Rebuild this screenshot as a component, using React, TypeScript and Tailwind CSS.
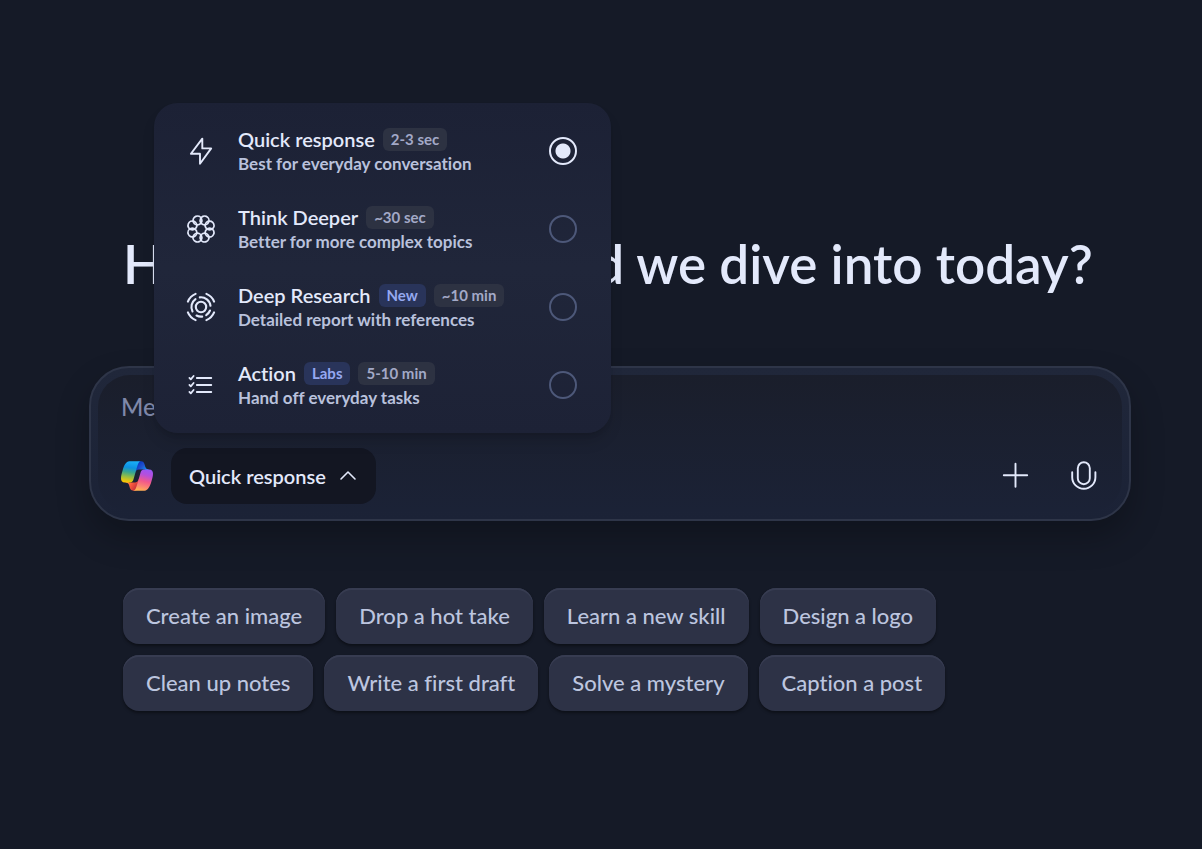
import { useState } from 'react';

const modes = [
  { id: 'quick', title: 'Quick response', text: 'Best for everyday conversation', time: '2-3 sec', icon: BoltIcon },
  { id: 'think', title: 'Think Deeper', text: 'Better for more complex topics', time: '~30 sec', icon: RosetteIcon },
  { id: 'research', title: 'Deep Research', text: 'Detailed report with references', tag: 'New', time: '~10 min', icon: RadarIcon },
  { id: 'action', title: 'Action', text: 'Hand off everyday tasks', tag: 'Labs', time: '5-10 min', icon: TasksIcon },
];

const suggestions = [
  ['Create an image', 'Drop a hot take', 'Learn a new skill', 'Design a logo'],
  ['Clean up notes', 'Write a first draft', 'Solve a mystery', 'Caption a post'],
];

function BoltIcon() {
  return (
    <svg width="32" height="32" viewBox="0 0 32 32" fill="none" stroke="currentColor" strokeWidth="1.9" strokeLinejoin="round" aria-hidden="true">
      <path d="M17.3 3.6 5.9 18.7H15V28.7L26.2 13.4H17.3Z" />
    </svg>
  );
}

function RosetteIcon() {
  return (
    <svg width="32" height="32" viewBox="0 0 32 32" fill="none" stroke="currentColor" strokeWidth="1.7" aria-hidden="true">
      {[22.5, 67.5, 112.5, 157.5, 202.5, 247.5, 292.5, 337.5].map((angle) => (
        <circle key={angle} cx="16" cy="6.7" r="4.4" transform={`rotate(${angle} 16 16)`} />
      ))}
    </svg>
  );
}

function RadarIcon() {
  return (
    <svg width="32" height="32" viewBox="0 0 32 32" fill="none" stroke="currentColor" strokeWidth="2.1" strokeLinecap="round" aria-hidden="true">
      <circle cx="16" cy="16" r="5.2" />
      <path d="M14.8 6.4A9.6 9.6 0 0 1 25.5 14.8M17.2 25.6A9.6 9.6 0 0 1 11.5 24.5M25 19.5A9.6 9.6 0 0 1 21.2 24.1M7.5 20.5A9.6 9.6 0 0 1 10.5 8.2" />
      <path d="M2.9 10.6A14.2 14.2 0 0 1 10.6 2.9M21.4 2.9A14.2 14.2 0 0 1 29.1 10.6M29.1 21.4A14.2 14.2 0 0 1 21.4 29.1M10.6 29.1A14.2 14.2 0 0 1 2.9 21.4" />
    </svg>
  );
}

function TasksIcon() {
  return (
    <svg width="32" height="32" viewBox="0 0 32 32" fill="none" stroke="currentColor" strokeWidth="1.8" strokeLinecap="round" strokeLinejoin="round" aria-hidden="true">
      <path d="M11.8 9H26.3M11.8 16H26.3M11.8 23H26.3" />
      <path d="M4.4 8.9 5.8 10.4 8.6 7M4.4 15.9 5.8 17.4 8.6 14M4.4 22.9 5.8 24.4 8.6 21" />
    </svg>
  );
}

function Logo() {
  return (
    <svg width="32" height="32" viewBox="0 0 24 24" role="img" aria-label="Copilot">
      <defs>
        <radialGradient id="fold-top" cx="85%" cy="100%" r="110%" gradientTransform="rotate(-10)">
          <stop offset="0.1" stopColor="#00aeff" />
          <stop offset="0.6" stopColor="#2253ce" />
          <stop offset="1" stopColor="#0736c4" />
        </radialGradient>
        <linearGradient id="fold-bottom" x1="0" y1="0" x2="1" y2="0.6">
          <stop offset="0" stopColor="#ffb657" />
          <stop offset="0.5" stopColor="#ff5f3d" />
          <stop offset="1" stopColor="#c02b3c" />
        </linearGradient>
        <linearGradient id="ribbon-left" x1="0.55" y1="0" x2="0.4" y2="1">
          <stop offset="0" stopColor="#19aef8" />
          <stop offset="0.3" stopColor="#0d91e1" />
          <stop offset="0.52" stopColor="#3aa58e" />
          <stop offset="0.75" stopColor="#98bd42" />
          <stop offset="1" stopColor="#ffc800" />
        </linearGradient>
        <linearGradient id="ribbon-right" x1="0.65" y1="0" x2="0.4" y2="1">
          <stop offset="0" stopColor="#9b55f4" />
          <stop offset="0.25" stopColor="#b64fdb" />
          <stop offset="0.55" stopColor="#f2598a" />
          <stop offset="0.8" stopColor="#fb8571" />
          <stop offset="1" stopColor="#ffb152" />
        </linearGradient>
      </defs>
      <g transform="translate(0 1)">
        <path fill="url(#fold-top)" d="M17.533 1.829A2.528 2.528 0 0 0 15.11 0h-.737a2.531 2.531 0 0 0-2.484 2.087l-1.263 6.937.314-1.08a2.528 2.528 0 0 1 2.424-1.833h4.284l1.797.706 1.731-.706h-.505a2.528 2.528 0 0 1-2.423-1.829l-.715-2.453z" />
        <path fill="url(#fold-bottom)" d="M6.726 20.16A2.528 2.528 0 0 0 9.152 22h1.566c1.37 0 2.49-1.1 2.525-2.48l.17-6.69-.357 1.228a2.528 2.528 0 0 1-2.423 1.83h-4.32l-1.54-.842-1.667.843h.497c1.124 0 2.113.75 2.426 1.84l.697 2.432z" />
        <path fill="url(#ribbon-left)" d="M15 0H6.252c-2.5 0-4 3.331-5 6.662-1.184 3.947-2.734 9.225 1.75 9.225H6.78c1.13 0 2.12-.753 2.43-1.847.657-2.317 1.809-6.359 2.713-9.436.46-1.563.842-2.906 1.43-3.742A1.97 1.97 0 0 1 15 0" />
        <path fill="url(#ribbon-right)" d="M9 22h8.749c2.5 0 4-3.332 5-6.663 1.184-3.948 2.734-9.227-1.75-9.227H17.22c-1.129 0-2.12.754-2.43 1.848a1149.2 1149.2 0 0 1-2.713 9.437c-.46 1.564-.842 2.907-1.43 3.743A1.97 1.97 0 0 1 9 22" />
      </g>
    </svg>
  );
}

function ModeMenu({ value, onChange }: { value: string; onChange: (id: string) => void }) {
  return (
    <div
      role="radiogroup"
      aria-label="Response mode"
      className="absolute bottom-full left-[-17px] z-10 mb-[15px] w-[457px] rounded-3xl bg-linear-to-b from-[#1c2135] via-[#20263a] to-[#1d2236] py-[9px] shadow-lg shadow-black/15"
    >
      {modes.map(({ id, title, text, tag, time, icon: Icon }) => (
        <label key={id} className="flex h-[78px] cursor-pointer items-center pr-[34px] pl-[31px] text-[#e3e9fb]">
          <Icon />
          <span className="ml-[21px] flex flex-1 flex-col pt-0.5">
            <span className="flex h-6 items-center gap-2 text-xl leading-6 font-semibold">
              {title}
              {tag && (
                <span className="rounded-md bg-[#29345a] px-2 text-[15px] leading-[23px] font-bold text-[#95a8f0]">{tag}</span>
              )}
              <span className="rounded-md bg-[#2d3242] px-2 text-[15px] leading-[23px] font-bold text-[#a3a9c7]">{time}</span>
            </span>
            <span className="text-[17px] leading-[26px] font-bold text-[#b9c1dc]">{text}</span>
          </span>
          <input
            type="radio"
            name="mode"
            value={id}
            checked={value === id}
            onChange={() => onChange(id)}
            className="size-7 cursor-pointer appearance-none rounded-full border-2 border-[#4d5879] checked:border-[#e3e9fb] checked:bg-[radial-gradient(circle,#e3e9fb_7px,transparent_8px)]"
          />
        </label>
      ))}
    </div>
  );
}

function Composer() {
  const [mode, setMode] = useState('quick');
  const [open, setOpen] = useState(true);
  const current = modes.find((m) => m.id === mode) ?? modes[0];

  return (
    <form className="mt-[66px] rounded-[40px] border-2 border-[#2e3548] bg-linear-to-b from-[#20273a] to-[#1b2236] p-[7px] shadow-[0_16px_32px_rgba(0,0,0,0.25)]">
      <div className="rounded-[32px] bg-linear-to-b from-[#1a1e2b] to-[#1b2236] pt-4 pb-2">
        <div className="px-[23px]">
          <textarea
            rows={1}
            aria-label="Message Copilot"
            placeholder="Message Copilot"
            className="block h-8 w-full resize-none bg-transparent text-2xl leading-8 font-medium text-[#e3e9fb] outline-none placeholder:text-[#7f88a9]"
          />
        </div>
        <div className="mt-[25px] flex items-center pr-[10px] pl-[23px]">
          <Logo />
          <div className="relative ml-[18px]">
            {open && <ModeMenu value={mode} onChange={setMode} />}
            <button
              type="button"
              aria-expanded={open}
              onClick={() => setOpen(!open)}
              className="flex h-14 items-center gap-3 rounded-2xl bg-[#131622] px-[18px] text-xl font-semibold text-[#e3e9fb]"
            >
              {current.title}
              <svg width="20" height="20" viewBox="0 0 20 20" fill="none" stroke="currentColor" strokeWidth="1.6" strokeLinecap="round" strokeLinejoin="round" aria-hidden="true">
                <path d="M3 13 10 6 17 13" />
              </svg>
            </button>
          </div>
          <div className="ml-auto flex gap-3 text-[#e3e9fb]">
            <button type="button" aria-label="Add" className="flex size-14 items-center justify-center">
              <svg width="32" height="32" viewBox="0 0 32 32" fill="none" stroke="currentColor" strokeWidth="1.9" strokeLinecap="round" aria-hidden="true">
                <path d="M15.5 3.8V26.7M3.8 15.2H27.2" />
              </svg>
            </button>
            <button type="button" aria-label="Talk" className="flex size-14 items-center justify-center">
              <svg width="32" height="32" viewBox="0 0 32 32" fill="none" stroke="currentColor" strokeWidth="1.9" strokeLinecap="round" aria-hidden="true">
                <rect x="9.8" y="2.2" width="12" height="22" rx="6" />
                <path d="M4.2 12.2V17.2A11.6 11.6 0 0 0 27.4 17.2V12.2" />
              </svg>
            </button>
          </div>
        </div>
      </div>
    </form>
  );
}

function App() {
  return (
    <div className="min-h-screen bg-[#151a27] font-[Lato,sans-serif] [font-variant-ligatures:none]">
      <main className="pt-[228px] pr-[71px] pb-12 pl-[89px]">
        <h1 className="pl-[34px] text-[53px] leading-[72px] font-semibold whitespace-nowrap text-[#e3e9fb]">
          Hi there, what should we dive into today?
        </h1>
        <Composer />
        <div className="mt-[67px] flex flex-col gap-[11px] pl-[34px]">
          {suggestions.map((row) => (
            <div key={row[0]} className="flex gap-[11px]">
              {row.map((label) => (
                <button
                  key={label}
                  type="button"
                  className="h-14 rounded-2xl bg-[#2d3246] px-[23px] pb-0.5 text-[22px] font-medium whitespace-nowrap text-[#bcc5df] shadow-[inset_0_2px_0_#373c51,0_2px_3px_rgba(0,0,0,0.4)]"
                >
                  {label}
                </button>
              ))}
            </div>
          ))}
        </div>
      </main>
    </div>
  );
}

export default App;
